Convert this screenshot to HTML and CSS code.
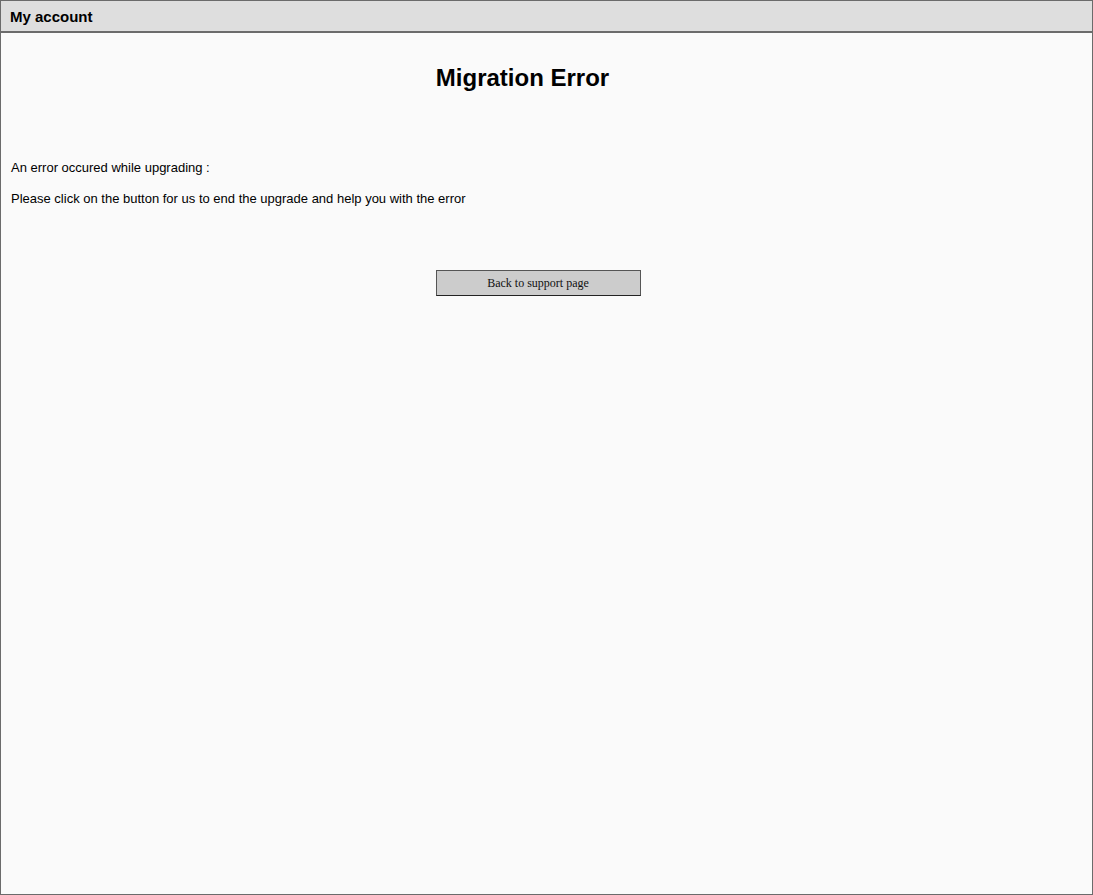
FILE: index.html
```html
<!DOCTYPE html>
<html>
<head>
<meta charset="utf-8">
<title>My account</title>
<link rel="stylesheet" href="styles.css">
</head>
<body>
<div class="frame">
  <div class="header">My account</div>
  <div class="content">
    <h1 class="title">Migration Error</h1>
    <p class="msg first">An error occured while upgrading :</p>
    <p class="msg">Please click on the button for us to end the upgrade and help you with the error</p>
    <div class="actions">
      <button class="btn" type="button">Back to support page</button>
    </div>
  </div>
</div>
</body>
</html>
```
FILE: styles.css
```css
html, body {
  margin: 0;
  padding: 0;
  height: 100%;
}
body {
  background: #fafafa;
  font-family: "Liberation Sans", Arial, sans-serif;
  color: #000;
}
.frame {
  box-sizing: border-box;
  width: 1093px;
  height: 895px;
  border: 1px solid #6b6b6b;
  background: #fafafa;
  display: flex;
  flex-direction: column;
}
.header {
  box-sizing: border-box;
  height: 32px;
  background: #dedede;
  border-bottom: 2px solid #6b6b6b;
  padding: 1px 9px 0;
  font-size: 15px;
  font-weight: bold;
  line-height: 30px;
}
.content {
  padding: 0 10px;
}
.title {
  margin: 31px 0 0 0;
  padding-right: 48px;
  text-align: center;
  font-size: 24px;
  font-weight: bold;
  line-height: 28px;
}
.msg {
  margin: 0;
  font-size: 13px;
  line-height: 15px;
}
.msg.first {
  margin-top: 68px;
}
.msg + .msg {
  margin-top: 16px;
}
.actions {
  margin-top: 64px;
  display: flex;
  justify-content: center;
  padding-right: 17px;
}
.btn {
  box-sizing: border-box;
  width: 205px;
  height: 26px;
  background: #cccccc;
  border: 1px solid #555;
  border-bottom-color: #222;
  border-radius: 0;
  font-family: "Liberation Serif", "Times New Roman", serif;
  font-size: 12px;
  color: #111;
  padding: 0;
  cursor: pointer;
}
```
